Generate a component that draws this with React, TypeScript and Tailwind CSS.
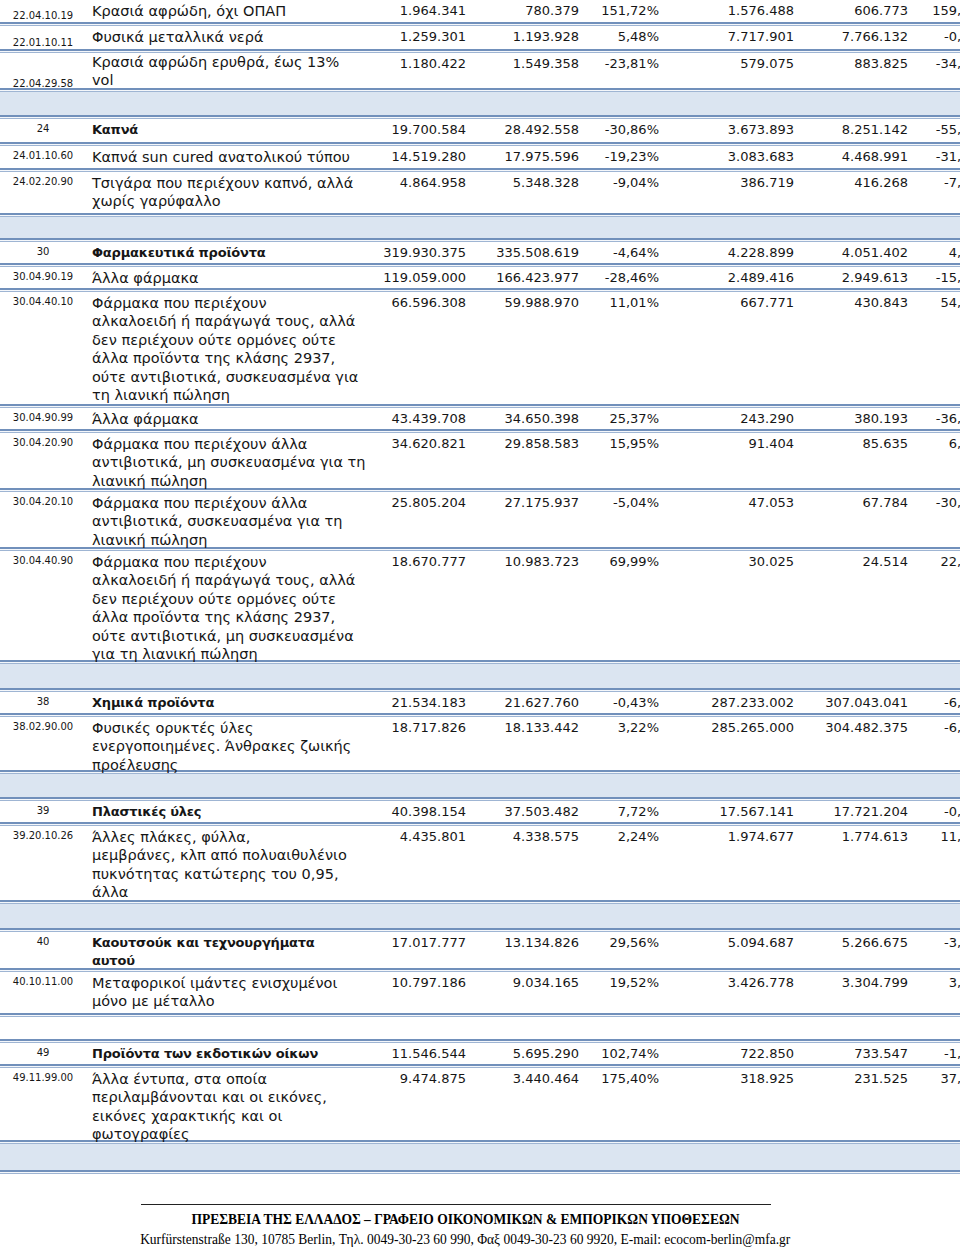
import React from "react";

type DataRow = {
  kind: "row";
  code: string;
  desc: string[];
  vals: string[];
  h: string;
  bold?: boolean;
  codeBottom?: boolean;
  tight?: boolean;
};
type Band = { kind: "band"; h: string; white?: boolean };
type Item = DataRow | Band;

const items: Item[] = [
  { kind: "row", code: "22.04.10.19", desc: ["Κρασιά αφρώδη, όχι ΟΠΑΠ"], vals: ["1.964.341", "780.379", "151,72%", "1.576.488", "606.773", "159,82%"], h: "h-[22px]", codeBottom: true },
  { kind: "row", code: "22.01.10.11", desc: ["Φυσικά μεταλλικά νερά"], vals: ["1.259.301", "1.193.928", "5,48%", "7.717.901", "7.766.132", "-0,62%"], h: "h-[23px]", codeBottom: true },
  { kind: "row", code: "22.04.29.58", desc: ["Κρασιά αφρώδη ερυθρά, έως 13%", "vol"], vals: ["1.180.422", "1.549.358", "-23,81%", "579.075", "883.825", "-34,48%"], h: "h-[35px]", codeBottom: true, tight: true },
  { kind: "band", h: "h-[23px]" },
  { kind: "row", code: "24", bold: true, desc: ["Καπνά"], vals: ["19.700.584", "28.492.558", "-30,86%", "3.673.893", "8.251.142", "-55,47%"], h: "h-[23px]" },
  { kind: "row", code: "24.01.10.60", desc: ["Καπνά sun cured ανατολικού τύπου"], vals: ["14.519.280", "17.975.596", "-19,23%", "3.083.683", "4.468.991", "-31,00%"], h: "h-[22px]" },
  { kind: "row", code: "24.02.20.90", desc: ["Τσιγάρα που περιέχουν καπνό, αλλά", "χωρίς γαρύφαλλο"], vals: ["4.864.958", "5.348.328", "-9,04%", "386.719", "416.268", "-7,10%"], h: "h-[41px]" },
  { kind: "band", h: "h-[21px]" },
  { kind: "row", code: "30", bold: true, desc: ["Φαρμακευτικά προϊόντα"], vals: ["319.930.375", "335.508.619", "-4,64%", "4.228.899", "4.051.402", "4,38%"], h: "h-[21px]" },
  { kind: "row", code: "30.04.90.19", desc: ["Άλλα φάρμακα"], vals: ["119.059.000", "166.423.977", "-28,46%", "2.489.416", "2.949.613", "-15,60%"], h: "h-[21px]" },
  { kind: "row", code: "30.04.40.10", desc: ["Φάρμακα που περιέχουν", "αλκαλοειδή ή παράγωγά τους, αλλά", "δεν περιέχουν ούτε ορμόνες ούτε", "άλλα προϊόντα της κλάσης 2937,", "ούτε αντιβιοτικά, συσκευασμένα για", "τη λιανική πώληση"], vals: ["66.596.308", "59.988.970", "11,01%", "667.771", "430.843", "54,99%"], h: "h-[112px]" },
  { kind: "row", code: "30.04.90.99", desc: ["Άλλα φάρμακα"], vals: ["43.439.708", "34.650.398", "25,37%", "243.290", "380.193", "-36,01%"], h: "h-[21px]" },
  { kind: "row", code: "30.04.20.90", desc: ["Φάρμακα που περιέχουν άλλα", "αντιβιοτικά, μη συσκευασμένα για τη", "λιανική πώληση"], vals: ["34.620.821", "29.858.583", "15,95%", "91.404", "85.635", "6,74%"], h: "h-[55px]" },
  { kind: "row", code: "30.04.20.10", desc: ["Φάρμακα που περιέχουν άλλα", "αντιβιοτικά, συσκευασμένα για τη", "λιανική πώληση"], vals: ["25.805.204", "27.175.937", "-5,04%", "47.053", "67.784", "-30,58%"], h: "h-[55px]" },
  { kind: "row", code: "30.04.40.90", desc: ["Φάρμακα που περιέχουν", "αλκαλοειδή ή παράγωγά τους, αλλά", "δεν περιέχουν ούτε ορμόνες ούτε", "άλλα προϊόντα της κλάσης 2937,", "ούτε αντιβιοτικά, μη συσκευασμένα", "για τη λιανική πώληση"], vals: ["18.670.777", "10.983.723", "69,99%", "30.025", "24.514", "22,48%"], h: "h-[109px]" },
  { kind: "band", h: "h-[24px]" },
  { kind: "row", code: "38", bold: true, desc: ["Χημικά προϊόντα"], vals: ["21.534.183", "21.627.760", "-0,43%", "287.233.002", "307.043.041", "-6,45%"], h: "h-[21px]" },
  { kind: "row", code: "38.02.90.00", desc: ["Φυσικές ορυκτές ύλες", "ενεργοποιημένες. Άνθρακες ζωικής", "προέλευσης"], vals: ["18.717.826", "18.133.442", "3,22%", "285.265.000", "304.482.375", "-6,31%"], h: "h-[53px]" },
  { kind: "band", h: "h-[23px]" },
  { kind: "row", code: "39", bold: true, desc: ["Πλαστικές ύλες"], vals: ["40.398.154", "37.503.482", "7,72%", "17.567.141", "17.721.204", "-0,87%"], h: "h-[21px]" },
  { kind: "row", code: "39.20.10.26", desc: ["Άλλες πλάκες, φύλλα,", "μεμβράνες, κλπ από πολυαιθυλένιο", "πυκνότητας κατώτερης του 0,95,", "άλλα"], vals: ["4.435.801", "4.338.575", "2,24%", "1.974.677", "1.774.613", "11,27%"], h: "h-[74px]" },
  { kind: "band", h: "h-[24px]" },
  { kind: "row", code: "40", bold: true, desc: ["Καουτσούκ και τεχνουργήματα", "αυτού"], vals: ["17.017.777", "13.134.826", "29,56%", "5.094.687", "5.266.675", "-3,27%"], h: "h-[36px]" },
  { kind: "row", code: "40.10.11.00", desc: ["Μεταφορικοί ιμάντες ενισχυμένοι", "μόνο με μέταλλο"], vals: ["10.797.186", "9.034.165", "19,52%", "3.426.778", "3.304.799", "3,69%"], h: "h-[41px]" },
  { kind: "band", h: "h-[22px]", white: true },
  { kind: "row", code: "49", bold: true, desc: ["Προϊόντα των εκδοτικών οίκων"], vals: ["11.546.544", "5.695.290", "102,74%", "722.850", "733.547", "-1,46%"], h: "h-[21px]" },
  { kind: "row", code: "49.11.99.00", desc: ["Άλλα έντυπα, στα οποία", "περιλαμβάνονται και οι εικόνες,", "εικόνες χαρακτικής και οι", "φωτογραφίες"], vals: ["9.474.875", "3.440.464", "175,40%", "318.925", "231.525", "37,75%"], h: "h-[72px]" },
  { kind: "band", h: "h-[26px]" },
];

function Sep() {
  return (
    <div className="flex w-[990px] flex-col">
      <div className="h-[2px] bg-[#7190bb]" />
      <div className="h-px bg-[#f4f7fb]" />
      <div className="h-px bg-[#9fb5d3]" />
    </div>
  );
}

function RowView({ r }: { r: DataRow }) {
  return (
    <div className={`grid grid-cols-[92px_268px_106px_113px_80px_135px_114px_82px] ${r.h} text-[#161616]`}>
      <div
        className={`pr-[6px] text-center text-[10px] leading-[12px] ${
          r.codeBottom ? "self-end" : "pt-[4px]"
        }`}
      >
        {r.code}
      </div>
      <div
        className={`relative z-10 whitespace-nowrap ${r.tight ? "pt-0" : "pt-[2px]"} leading-[18.4px] ${
          r.bold ? "text-[13px] font-bold tracking-[-0.2px]" : "text-[14.5px]"
        }`}
      >
        {r.desc.map((l, i) => (
          <div key={i}>{l}</div>
        ))}
      </div>
      {r.vals.map((v, i) => (
        <div key={i} className="whitespace-nowrap pt-[2px] text-right text-[13px] leading-[18.5px]">
          {v}
        </div>
      ))}
    </div>
  );
}

export default function App() {
  return (
    <div className="h-[1249px] w-[960px] overflow-hidden bg-white font-['DejaVu_Sans',sans-serif]">
      <div className="w-[990px]">
        {items.map((it, i) => (
          <React.Fragment key={i}>
            {i > 0 && <Sep />}
            {it.kind === "row" ? (
              <RowView r={it} />
            ) : (
              <div className={`${it.h} ${it.white ? "bg-white" : "bg-[#dbe5f1]"}`} />
            )}
          </React.Fragment>
        ))}
        <Sep />
      </div>
      <div className="ml-[141px] mt-[30px] flex w-[648px] flex-col items-center font-['Liberation_Serif',serif] text-black">
        <div className="h-px w-[630px] self-start bg-[#222]" />
        <div className="mt-[5px] whitespace-nowrap text-[15px] font-bold leading-[18px] scale-x-[0.9]">
          ΠΡΕΣΒΕΙΑ ΤΗΣ ΕΛΛΑΔΟΣ – ΓΡΑΦΕΙΟ ΟΙΚΟΝΟΜΙΚΩΝ &amp; ΕΜΠΟΡΙΚΩΝ ΥΠΟΘΕΣΕΩΝ
        </div>
        <div className="mt-[2px] whitespace-nowrap text-[15px] leading-[18px] scale-x-[0.9]">
          Kurfürstenstraße 130, 10785 Berlin, Τηλ. 0049-30-23 60 990, Φαξ 0049-30-23 60 9920, E-mail: ecocom-berlin@mfa.gr
        </div>
      </div>
    </div>
  );
}
